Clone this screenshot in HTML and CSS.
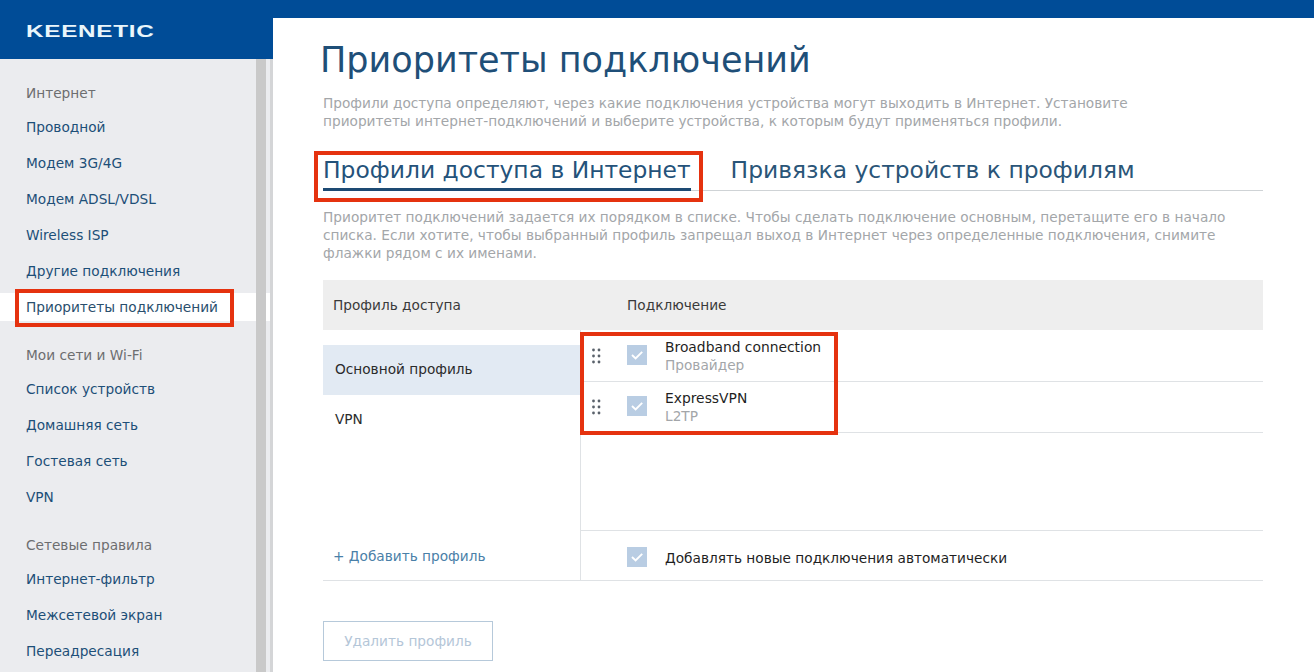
FILE: index.html
```html
<!DOCTYPE html>
<html lang="ru">
<head>
<meta charset="utf-8">
<title>Keenetic</title>
<link rel="stylesheet" href="styles.css">
</head>
<body>
<div class="topbar"></div>
<div class="shell">
  <aside class="sidebar">
    <div class="logo"><span class="logo-text">KEENETIC</span></div>
    <nav class="nav">
      <div class="scrollbar"></div>
      <div class="nav-head">Интернет</div>
      <a class="nav-item">Проводной</a>
      <a class="nav-item">Модем 3G/4G</a>
      <a class="nav-item">Модем ADSL/VDSL</a>
      <a class="nav-item">Wireless ISP</a>
      <a class="nav-item">Другие подключения</a>
      <a class="nav-item active"><span class="mark mark-nav"></span>Приоритеты подключений</a>
      <div class="nav-head group">Мои сети и Wi-Fi</div>
      <a class="nav-item">Список устройств</a>
      <a class="nav-item">Домашняя сеть</a>
      <a class="nav-item">Гостевая сеть</a>
      <a class="nav-item">VPN</a>
      <div class="nav-head group">Сетевые правила</div>
      <a class="nav-item">Интернет-фильтр</a>
      <a class="nav-item">Межсетевой экран</a>
      <a class="nav-item">Переадресация</a>
    </nav>
  </aside>
  <main class="main">
    <h1 class="title">Приоритеты подключений</h1>
    <p class="lead">Профили доступа определяют, через какие подключения устройства могут выходить в Интернет. Установите<br>приоритеты интернет-подключений и выберите устройства, к которым будут применяться профили.</p>
    <div class="tabs">
      <div class="tab tab-active"><span class="mark mark-tab"></span>Профили доступа в Интернет</div>
      <div class="tab">Привязка устройств к профилям</div>
    </div>
    <p class="lead lead-2">Приоритет подключений задается их порядком в списке. Чтобы сделать подключение основным, перетащите его в начало<br>списка. Если хотите, чтобы выбранный профиль запрещал выход в Интернет через определенные подключения, снимите<br>флажки рядом с их именами.</p>
    <div class="thead">
      <div class="col-left">Профиль доступа</div>
      <div class="col-right">Подключение</div>
    </div>
    <div class="tbody">
      <div class="profiles">
        <div class="profile selected">Основной профиль</div>
        <div class="profile">VPN</div>
        <a class="add">+ Добавить профиль</a>
      </div>
      <div class="conns">
        <span class="mark mark-conn"></span>
        <div class="conn">
          <svg class="grip" width="9" height="16" viewBox="0 0 9 16"><g fill="#5a626b"><circle cx="1.5" cy="2" r="1.4"/><circle cx="7" cy="2" r="1.4"/><circle cx="1.5" cy="8" r="1.4"/><circle cx="7" cy="8" r="1.4"/><circle cx="1.5" cy="14" r="1.4"/><circle cx="7" cy="14" r="1.4"/></g></svg>
          <svg class="check" width="20" height="20" viewBox="0 0 20 20"><rect width="20" height="20" fill="#b9cde3"/><path d="M5 10l3.6 3.4 6.6-6.6" fill="none" stroke="#fff" stroke-width="1.9"/></svg>
          <div class="conn-text"><div class="conn-name">Broadband connection</div><div class="conn-sub">Провайдер</div></div>
        </div>
        <div class="conn">
          <svg class="grip" width="9" height="16" viewBox="0 0 9 16"><g fill="#5a626b"><circle cx="1.5" cy="2" r="1.4"/><circle cx="7" cy="2" r="1.4"/><circle cx="1.5" cy="8" r="1.4"/><circle cx="7" cy="8" r="1.4"/><circle cx="1.5" cy="14" r="1.4"/><circle cx="7" cy="14" r="1.4"/></g></svg>
          <svg class="check" width="20" height="20" viewBox="0 0 20 20"><rect width="20" height="20" fill="#b9cde3"/><path d="M5 10l3.6 3.4 6.6-6.6" fill="none" stroke="#fff" stroke-width="1.9"/></svg>
          <div class="conn-text"><div class="conn-name">ExpressVPN</div><div class="conn-sub">L2TP</div></div>
        </div>
        <div class="conn-spacer"></div>
        <div class="auto">
          <svg class="check" width="20" height="20" viewBox="0 0 20 20"><rect width="20" height="20" fill="#b9cde3"/><path d="M5 10l3.6 3.4 6.6-6.6" fill="none" stroke="#fff" stroke-width="1.9"/></svg>
          <span class="auto-label">Добавлять новые подключения автоматически</span>
        </div>
      </div>
    </div>
    <button class="delete" type="button">Удалить профиль</button>
  </main>
</div>
</body>
</html>
```
FILE: styles.css
```css
* { box-sizing: border-box; }
html, body { margin: 0; height: 672px; overflow: hidden; }
body { font-family: "DejaVu Sans", Verdana, sans-serif; font-size: 13.7px; background: #fff; color: #1f1f1f; }
.topbar { height: 18px; background: #004c97; }
.shell { display: flex; height: 654px; }

.sidebar { width: 273px; flex: none; background: #ebecef; overflow: hidden; }
.logo { height: 41px; background: #004c97; padding: 5px 0 0 26px; display: flex; align-items: flex-start; }
.logo-text { font-family: "Liberation Sans", Arial, sans-serif; font-weight: 700; font-size: 16.5px; line-height: 16px; color: #eaf6fb; transform: scaleX(1.47); transform-origin: left center; letter-spacing: 0.5px; }
.nav { position: relative; display: flex; flex-direction: column; height: 613px; padding-top: 18px; border-right: 3px solid #d4d5d7; }
.nav > * { flex: none; }
.scrollbar { position: absolute; left: 256px; top: 0; width: 10px; height: 100%; background: #c9c9c9; z-index: 1; }
.nav-head { height: 32px; line-height: 32px; padding-left: 26px; color: #6d6e70; }
.nav-head.group { margin-top: 14px; }
.nav-item { display: block; position: relative; height: 28px; line-height: 28px; margin: 4px 0; padding-left: 26px; color: #1d4f78; }
.nav-item.active { background: #fff; color: #2a4f6d; }

.mark { position: absolute; border: 4px solid #e5320f; pointer-events: none; }
.mark-nav { left: 15px; top: -4px; width: 219px; height: 38px; }
.mark-tab { left: -9px; top: 7px; width: 389px; height: 51px; }
.mark-conn { left: -1px; top: 2px; width: 258px; height: 103px; }

.main { flex: 1; padding: 0 51px 0 50px; min-width: 0; }
.title { margin: 22px 0 0 -3px; font-size: 35px; font-weight: 400; line-height: 40px; color: #1f4f78; }
.lead { margin: 14px 0 0; font-size: 13.7px; line-height: 18px; color: #a3a6a9; }
.tabs { display: flex; gap: 40px; height: 47px; margin-top: 14px; border-bottom: 1px solid #cfd3d6; }
.tab { position: relative; font-size: 23.4px; line-height: 32px; padding-top: 10px; color: #2a5578; height: 47px; }
.tab-active { color: #24527a; border-bottom: 3px solid #1d4a73; }
.lead-2 { margin-top: 17px; }
.thead { display: flex; height: 50px; margin-top: 18px; background: #eeeeee; color: #3a3a3a; align-items: center; }
.col-left { width: 257px; padding-left: 10px; }
.col-right { padding-left: 47px; }
.tbody { display: flex; height: 251px; border-bottom: 1px solid #dfe2e5; }
.profiles { width: 258px; flex: none; border-right: 1px solid #dfe2e5; padding-top: 15px; display: flex; flex-direction: column; }
.profile { height: 50px; line-height: 48px; padding-left: 12px; color: #2b2b2b; flex: none; }
.selected { background: #e2eaf3; }
.add { margin-top: auto; margin-bottom: 16px; padding-left: 10px; color: #4a80a8; }
.conns { position: relative; flex: 1; display: flex; flex-direction: column; padding-top: 1px; }
.conn { display: flex; align-items: center; height: 51px; border-bottom: 1px solid #dfe2e5; flex: none; }
.conn .check { margin-top: -2px; }
.grip { margin-left: 11px; flex: none; }
.check { flex: none; margin-left: 26px; }
.conn-text { margin-left: 18px; }
.conn-name { line-height: 18px; font-size: 13.85px; color: #1f1f1f; }
.conn-sub { line-height: 18px; color: #a3a6a9; }
.conn-spacer { height: 98px; border-bottom: 1px solid #dfe2e5; flex: none; }
.auto { display: flex; align-items: center; flex: 1; padding: 3px 0 0 20px; }
.auto-label { margin: 2px 0 0 18px; color: #1f1f1f; }
.delete { display: block; margin-top: 40px; width: 170px; height: 40px; background: #fff; border: 1px solid #b6c9da; color: #b4c6d8; font: 13.7px "DejaVu Sans", Verdana, sans-serif; }
```
